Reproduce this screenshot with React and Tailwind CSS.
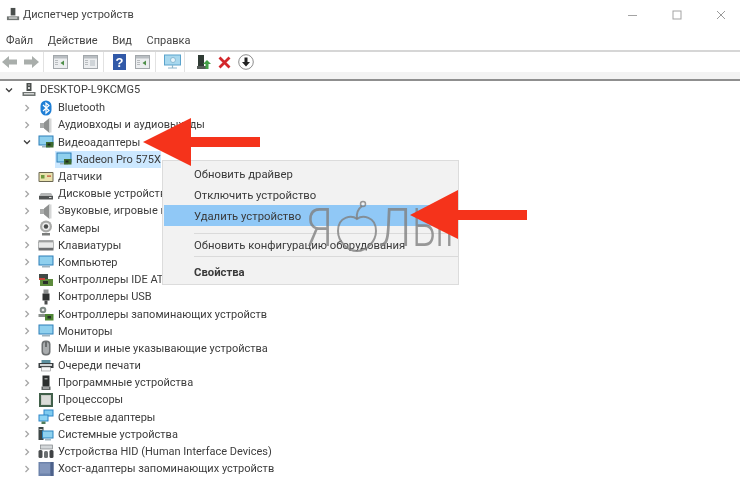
import React from "react";

const I = ({ children, w = 16, h = 16, className = "" }) => (
  <svg width={w} height={h} viewBox="0 0 16 16" className={`shrink-0 ${className}`}>{children}</svg>
);

const Computer = () => (
  <I>
    <rect x="5.5" y="1" width="5" height="8" fill="#4a4f4d" />
    <rect x="7" y="2.5" width="2" height="1" fill="#c8c8c8" />
    <rect x="7" y="5" width="2" height="2" fill="#d8d8d8" />
    <rect x="1.5" y="10" width="13" height="4" fill="#6f7472" />
    <rect x="3" y="11" width="10" height="1.5" fill="#d5d7d6" />
  </I>
);
const Bt = () => (
  <I>
    <rect x="2.5" y="0.5" width="11" height="15" rx="5.5" fill="#1f7fd6" />
    <path d="M5 5l6 5.5-3 2.7V3l3 2.5L5 11" fill="none" stroke="#fff" strokeWidth="1.2" />
  </I>
);
const Speaker = () => (
  <I>
    <rect x="2" y="6" width="4" height="5" fill="#a9abaa" />
    <path d="M6 5.5L11.5 1v15L6 11.5z" fill="#8f9190" />
    <rect x="11.5" y="1.5" width="2" height="14" fill="#d6d7d7" />
  </I>
);
const Monitor = ({ card }) => (
  <I>
    <rect x="0.5" y="1.5" width="15" height="10" fill="#2d7fb8" />
    <rect x="1.5" y="2.5" width="13" height="8" fill="#8fd0ee" />
    <rect x="4" y="12" width="8" height="1.5" fill="#9fb4bf" />
    {card && <rect x="8" y="8" width="7.5" height="5.5" fill="#3c6a2e" />}
    {card && <rect x="9.5" y="9.5" width="3" height="2" fill="#202820" />}
  </I>
);
const VideoIcon = () => <Monitor card />;
const Sensor = () => (
  <I>
    <rect x="0.5" y="3" width="15" height="10" rx="1" fill="#6a6650" />
    <rect x="1.5" y="4" width="13" height="8" fill="#e9e2ad" />
    <rect x="3" y="6" width="3.5" height="3.5" fill="#6f9a3e" />
    <rect x="9" y="6.5" width="4" height="1.2" fill="#c24a2e" />
  </I>
);
const Disk = () => (
  <I>
    <path d="M3 7h10l2 3v3H1v-3z" fill="#b5b7b7" />
    <rect x="1" y="10" width="14" height="3.5" fill="#505353" />
    <rect x="11" y="11" width="2.5" height="1" fill="#d9d9d9" />
  </I>
);
const Camera = () => (
  <I>
    <circle cx="8" cy="6.5" r="6" fill="#a9aaa8" />
    <circle cx="8" cy="6.5" r="3.8" fill="#ededed" />
    <circle cx="8" cy="6.5" r="2.2" fill="#4b4d4c" />
    <rect x="4" y="13" width="8" height="2.5" fill="#7a7c7b" />
  </I>
);
const Keyboard = () => (
  <I>
    <rect x="0.5" y="3" width="15" height="2" fill="#a7a9aa" />
    <rect x="0.5" y="5" width="15" height="6" fill="#e8e9e9" stroke="#8a8c8d" strokeWidth="0.6" />
    <rect x="0.5" y="11" width="15" height="2.5" fill="#6c6e70" />
  </I>
);
const Ide = () => (
  <I>
    <rect x="1" y="2" width="9" height="5" fill="#3f4a46" />
    <rect x="2" y="7" width="13" height="7" fill="#5d8b3c" />
    <rect x="5" y="9" width="5" height="3" fill="#293028" />
    <rect x="1" y="6" width="6" height="2" fill="#c7463a" />
  </I>
);
const Usb = () => (
  <I>
    <rect x="5.5" y="0.5" width="5" height="4" fill="#8d8f8f" />
    <rect x="4.5" y="4.5" width="7" height="7" fill="#2f3131" />
    <rect x="6.5" y="11.5" width="3" height="4" fill="#4a4c4c" />
  </I>
);
const Storage = () => (
  <I>
    <circle cx="5" cy="4" r="3.3" fill="#7f8a86" />
    <circle cx="5" cy="4" r="1.3" fill="#e6e6e6" />
    <rect x="0.5" y="8" width="7" height="3" fill="#8a8f8c" />
    <rect x="7" y="8" width="8.5" height="6.5" fill="#4f8635" />
    <rect x="9.5" y="10" width="3.5" height="2.5" fill="#263026" />
  </I>
);
const Mouse = () => (
  <I>
    <rect x="3.5" y="0.5" width="9" height="15" rx="4" fill="#6d7072" />
    <rect x="5" y="2" width="6" height="12" rx="3" fill="#a9acae" />
    <rect x="7.5" y="2" width="1" height="5" fill="#2c2e2f" />
  </I>
);
const Printer = () => (
  <I>
    <rect x="3.5" y="2" width="9" height="3" fill="#5c8f9e" />
    <rect x="0.5" y="5" width="15" height="5" fill="#3a3f41" />
    <rect x="2" y="6" width="12" height="2" fill="#d2d5d6" />
    <rect x="3.5" y="9" width="9" height="4" fill="#f7f7f7" stroke="#777" strokeWidth="0.5" />
  </I>
);
const Prog = () => (
  <I>
    <rect x="4.5" y="0.5" width="7" height="11" fill="#2c2f2e" />
    <rect x="6.5" y="3" width="3" height="1.5" fill="#9aa09d" />
    <rect x="3.5" y="11.5" width="9" height="3.5" fill="#5f6362" />
    <rect x="5" y="12.5" width="6" height="1" fill="#dcdcdc" />
  </I>
);
const Cpu = () => (
  <I>
    <rect x="1" y="1" width="14" height="14" fill="#41604a" />
    <rect x="3" y="3" width="10" height="10" fill="#c8ccc6" />
    <rect x="4" y="4" width="8" height="8" fill="#dadcd8" />
  </I>
);
const Net = () => (
  <I>
    <rect x="5.5" y="0.5" width="10" height="7" fill="#2d86c8" />
    <rect x="6.5" y="1.5" width="8" height="5" fill="#7fcbf0" />
    <rect x="0.5" y="5.5" width="10" height="7" fill="#2d86c8" />
    <rect x="1.5" y="6.5" width="8" height="5" fill="#8dd3f3" />
    <rect x="3.5" y="12.5" width="4" height="2.5" fill="#4f7c5a" />
  </I>
);
const Sys = () => (
  <I>
    <rect x="0.5" y="1" width="5" height="13" fill="#3d4746" />
    <rect x="1.5" y="3" width="3" height="1" fill="#cfcfcf" />
    <rect x="4" y="4.5" width="11.5" height="8" fill="#2c86bf" />
    <rect x="5" y="5.5" width="9.5" height="6" fill="#8fd2ef" />
    <rect x="7" y="13" width="6" height="1.5" fill="#a3b8c2" />
  </I>
);
const Hid = () => (
  <I>
    <rect x="2.5" y="1" width="12" height="4" fill="#d4d8da" stroke="#7d8285" strokeWidth="0.7" />
    <rect x="0.5" y="6" width="4" height="8" rx="1.5" fill="#4b4e50" />
    <rect x="6" y="7" width="4" height="7" rx="1.5" fill="#6c7072" />
    <rect x="11.5" y="6" width="4" height="8" rx="1.5" fill="#3f4244" />
  </I>
);
const Host = () => (
  <I>
    <rect x="0.5" y="1" width="15" height="14" fill="#6d83ab" />
    <rect x="2" y="2.5" width="10" height="10" fill="#8397bc" />
    <rect x="12.5" y="1" width="3" height="14" fill="#4d618a" />
  </I>
);

const Chevron = ({ open }) => (
  <svg width="8" height="8" viewBox="0 0 8 8" className="shrink-0">
    {open ? (
      <path d="M1 2.500L4 5.500L7 2.500" fill="none" stroke="#3e3e3e" strokeWidth="1.300" />
    ) : (
      <path d="M2.500 1L5.500 4L2.500 7" fill="none" stroke="#a6a6a6" strokeWidth="1.300" />
    )}
  </svg>
);

const rows = [
  [Bt, "Bluetooth"],
  [Speaker, "Аудиовходы и аудиовыходы"],
  [VideoIcon, "Видеоадаптеры", true],
  ["child"],
  [Sensor, "Датчики"],
  [Disk, "Дисковые устройства"],
  [Speaker, "Звуковые, игровые и видеоустройства"],
  [Camera, "Камеры"],
  [Keyboard, "Клавиатуры"],
  [Monitor, "Компьютер"],
  [Ide, "Контроллеры IDE ATA/ATAPI"],
  [Usb, "Контроллеры USB"],
  [Storage, "Контроллеры запоминающих устройств"],
  [Monitor, "Мониторы"],
  [Mouse, "Мыши и иные указывающие устройства"],
  [Printer, "Очереди печати"],
  [Prog, "Программные устройства"],
  [Cpu, "Процессоры"],
  [Net, "Сетевые адаптеры"],
  [Sys, "Системные устройства"],
  [Hid, "Устройства HID (Human Interface Devices)"],
  [Host, "Хост-адаптеры запоминающих устройств"],
];

const Sep = () => <div className="w-px h-[20px] bg-[#e2e2e2]" />;

const Page = ({ arrow }) => (
  <svg width="15" height="16" viewBox="0 0 15 16" className="shrink-0">
    <rect x="0.500" y="1.500" width="14" height="13" fill="#eceef0" stroke="#a2a7ab" />
    <rect x="1" y="2" width="13" height="2.500" fill="#b9bec2" />
    <rect x="2" y="6" width="3" height="1" fill="#b8bcbf" />
    <rect x="2" y="8" width="3" height="1" fill="#b8bcbf" />
    <rect x="2" y="10" width="3" height="1" fill="#b8bcbf" />
    {arrow ? <path d="M11 6.500v5L7.500 9z" fill="#4f8f4a" /> : <rect x="7" y="6" width="5" height="6" fill="#cfd4d8" />}
  </svg>
);

const wmStroke = "#808080";

export default function App() {
  return (
    <div className="relative w-[740px] h-[485px] overflow-hidden bg-white text-[#3c3c3c] text-[11px] leading-none font-['Roboto','Noto_Sans',sans-serif] blur-[0.35px]">
      {/* title bar */}
      <div className="flex items-center h-[29px] pl-[6px]">
        <I w={15} h={15}>
          <rect x="5" y="1" width="5" height="8" fill="#4a4f4d" />
          <rect x="1" y="10" width="13" height="4" fill="#6f7472" />
          <rect x="3" y="11" width="9" height="1.500" fill="#d5d7d6" />
        </I>
        <span className="ml-[2px] text-[11px] text-[#444]">Диспетчер устройств</span>
        <div className="ml-auto flex items-center">
          <svg width="10" height="10" viewBox="0 0 10 10" className="mr-[34px]"><path d="M0 5.500h9" stroke="#a3a3a3" strokeWidth="1" /></svg>
          <svg width="10" height="10" viewBox="0 0 10 10" className="mr-[34px]"><rect x="1" y="1" width="8" height="8" fill="none" stroke="#a3a3a3" strokeWidth="1" /></svg>
          <svg width="10" height="10" viewBox="0 0 10 10" className="mr-[14px]"><path d="M1 1l8 8M9 1l-8 8" stroke="#9a9a9a" strokeWidth="1" /></svg>
        </div>
      </div>
      {/* menu */}
      <div className="flex items-center h-[21px] pl-[6px] pt-[1px] gap-[14.500px] text-[#444]">
        <span>Файл</span>
        <span>Действие</span>
        <span>Вид</span>
        <span>Справка</span>
      </div>
      {/* toolbar */}
      <div className="flex items-center h-[22px] border-t-2 border-[#d6d6d6] pl-[2px]">
        <svg width="16" height="14" viewBox="0 0 16 14" className="shrink-0"><path d="M0 7l7-6v3.500h8v5H7V13z" fill="#a9aeab" /></svg>
        <svg width="16" height="14" viewBox="0 0 16 14" className="ml-[5px] shrink-0"><path d="M16 7L9 1v3.500H1v5h8V13z" fill="#a9aeab" /></svg>
        <div className="ml-[4px]"><Sep /></div>
        <div className="ml-[9px]"><Page arrow /></div>
        <div className="ml-[15px]"><Page /></div>
        <div className="ml-[5px]"><Sep /></div>
        <svg width="13" height="16" viewBox="0 0 13 16" className="ml-[9px] shrink-0">
          <rect width="13" height="16" fill="#3159a8" />
          <text x="6.500" y="13" textAnchor="middle" fontSize="13" fontWeight="700" fill="#fff" fontFamily="Liberation Sans">?</text>
        </svg>
        <div className="ml-[9px]"><Page arrow /></div>
        <div className="ml-[5px]"><Sep /></div>
        <svg width="17" height="16" viewBox="0 0 17 16" className="ml-[8px] shrink-0">
          <rect x="0.500" y="1" width="16" height="10" fill="#a8d8ee" stroke="#5aa3cc" />
          <circle cx="9" cy="6" r="2.500" fill="#e8f5fb" stroke="#70a8c4" strokeWidth="0.700" />
          <path d="M4 14h9M8.500 11v3" stroke="#8eb6cb" strokeWidth="1.200" />
        </svg>
        <div className="ml-[3px]"><Sep /></div>
        <svg width="14" height="17" viewBox="0 0 14 17" className="ml-[12px] shrink-0">
          <rect x="1" y="1" width="6" height="11" fill="#2f3b34" />
          <rect x="0" y="12" width="9" height="3" fill="#565c58" />
          <path d="M10 6l4 4h-2.500v5h-3v-5H6z" fill="#43a047" />
        </svg>
        <svg width="13" height="13" viewBox="0 0 13 13" className="ml-[7px] shrink-0"><path d="M1.500 1.500l10 10M11.500 1.500l-10 10" stroke="#d3272b" strokeWidth="2.800" /></svg>
        <svg width="16" height="16" viewBox="0 0 16 16" className="ml-[7px] shrink-0">
          <circle cx="8" cy="8" r="7.300" fill="#fff" stroke="#8d8d8d" />
          <path d="M6.500 3.500h3V8H12l-4 4.500L4 8h2.500z" fill="#222" />
        </svg>
      </div>
      <div className="h-[7px] bg-[#f3f3f3] border-b-2 border-[#8f8f8f] box-content" />
      {/* tree */}
      <div>
        <div className="flex items-center h-[17.200px] pl-[5px]">
          <Chevron open />
          <div className="ml-[8px]"><Computer /></div>
          <span className="ml-[3px]">DESKTOP-L9KCMG5</span>
        </div>
        <div className="mt-[1px]">
          {rows.map((r, i) =>
            r[0] === "child" ? (
              <div key={i} className="flex items-center h-[17.200px] pl-[55px]">
                <div className="flex items-center h-[17.200px] w-[106px] bg-[#cce8ff] pl-[1px] whitespace-nowrap">
                  <Monitor card />
                  <span className="ml-[4px]">Radeon Pro 575X</span>
                </div>
              </div>
            ) : (
              <div key={i} className="flex items-center h-[17.200px] pl-[23px]">
                <Chevron open={r[2]} />
                <div className="ml-[7px]">{React.createElement(r[0])}</div>
                <span className="ml-[4px] whitespace-nowrap">{r[1]}</span>
              </div>
            )
          )}
        </div>
      </div>

      {/* context menu */}
      <div className="absolute left-[162px] top-[160px] w-[297px] h-[125px] overflow-hidden bg-[#f2f2f2] border border-[#dcdcdc] pt-[2px] pl-[1px] text-[11.300px] text-[#3a3a3a]">
        <div className="h-[22px] flex items-center pl-[30px] pt-[1px]">Обновить драйвер</div>
        <div className="h-[20px] flex items-center pl-[30px] pt-[1px]">Отключить устройство</div>
        <div className="h-[21px] flex items-center pl-[30px] pt-[3px] bg-[#90c8f6]">Удалить устройство</div>
        <div className="h-px bg-[#dadada] ml-[30px] mt-[7px]" />
        <div className="h-[20px] flex items-center pl-[30px] pt-[3px]">Обновить конфигурацию оборудования</div>
        <div className="h-px bg-[#dadada] ml-[30px] mt-[2px]" />
        <div className="h-[30px] flex items-center pl-[30px] pt-[2px] font-bold">Свойства</div>
        {/* watermark */}
        <div className="absolute left-[143px] top-[38px] flex items-end h-[56px] text-[54px] leading-none font-light text-[#808080]/80 font-['Roboto',sans-serif] whitespace-nowrap">
          <span className="w-[29px] inline-block scale-x-[0.8] origin-left">Я</span>
          <svg width="44" height="56" viewBox="0 0 44 56" className="shrink-0">
            <path d="M22 20c-5-4-19-3-19 12 0 10 9 20 19 20s19-10 19-20c0-15-14-16-19-12z" fill="none" stroke={wmStroke} strokeOpacity="0.8" strokeWidth="2" />
            <path d="M22 20c-1-6 1-10 5-13" fill="none" stroke={wmStroke} strokeOpacity="0.8" strokeWidth="2" />
            <circle cx="28" cy="5" r="2.500" fill="none" stroke={wmStroke} strokeOpacity="0.8" strokeWidth="1.500" />
          </svg>
          <span className="w-[33px] inline-block scale-x-[0.85] origin-left">Л</span>
          <span className="w-[70px] inline-block scale-x-[0.72] origin-left">ЫК</span>
        </div>
      </div>

      {/* red arrows */}
      <svg width="120" height="50" viewBox="0 0 120 50" className="absolute left-[141px] top-[117px]">
        <path d="M2 25L50 1V20H119V30H50V49z" fill="#f5331b" />
      </svg>
      <svg width="120" height="51" viewBox="0 0 120 51" className="absolute left-[407px] top-[189px]">
        <path d="M3 26L51 1V21H120V31H51V50z" fill="#f5331b" />
      </svg>
    </div>
  );
}
